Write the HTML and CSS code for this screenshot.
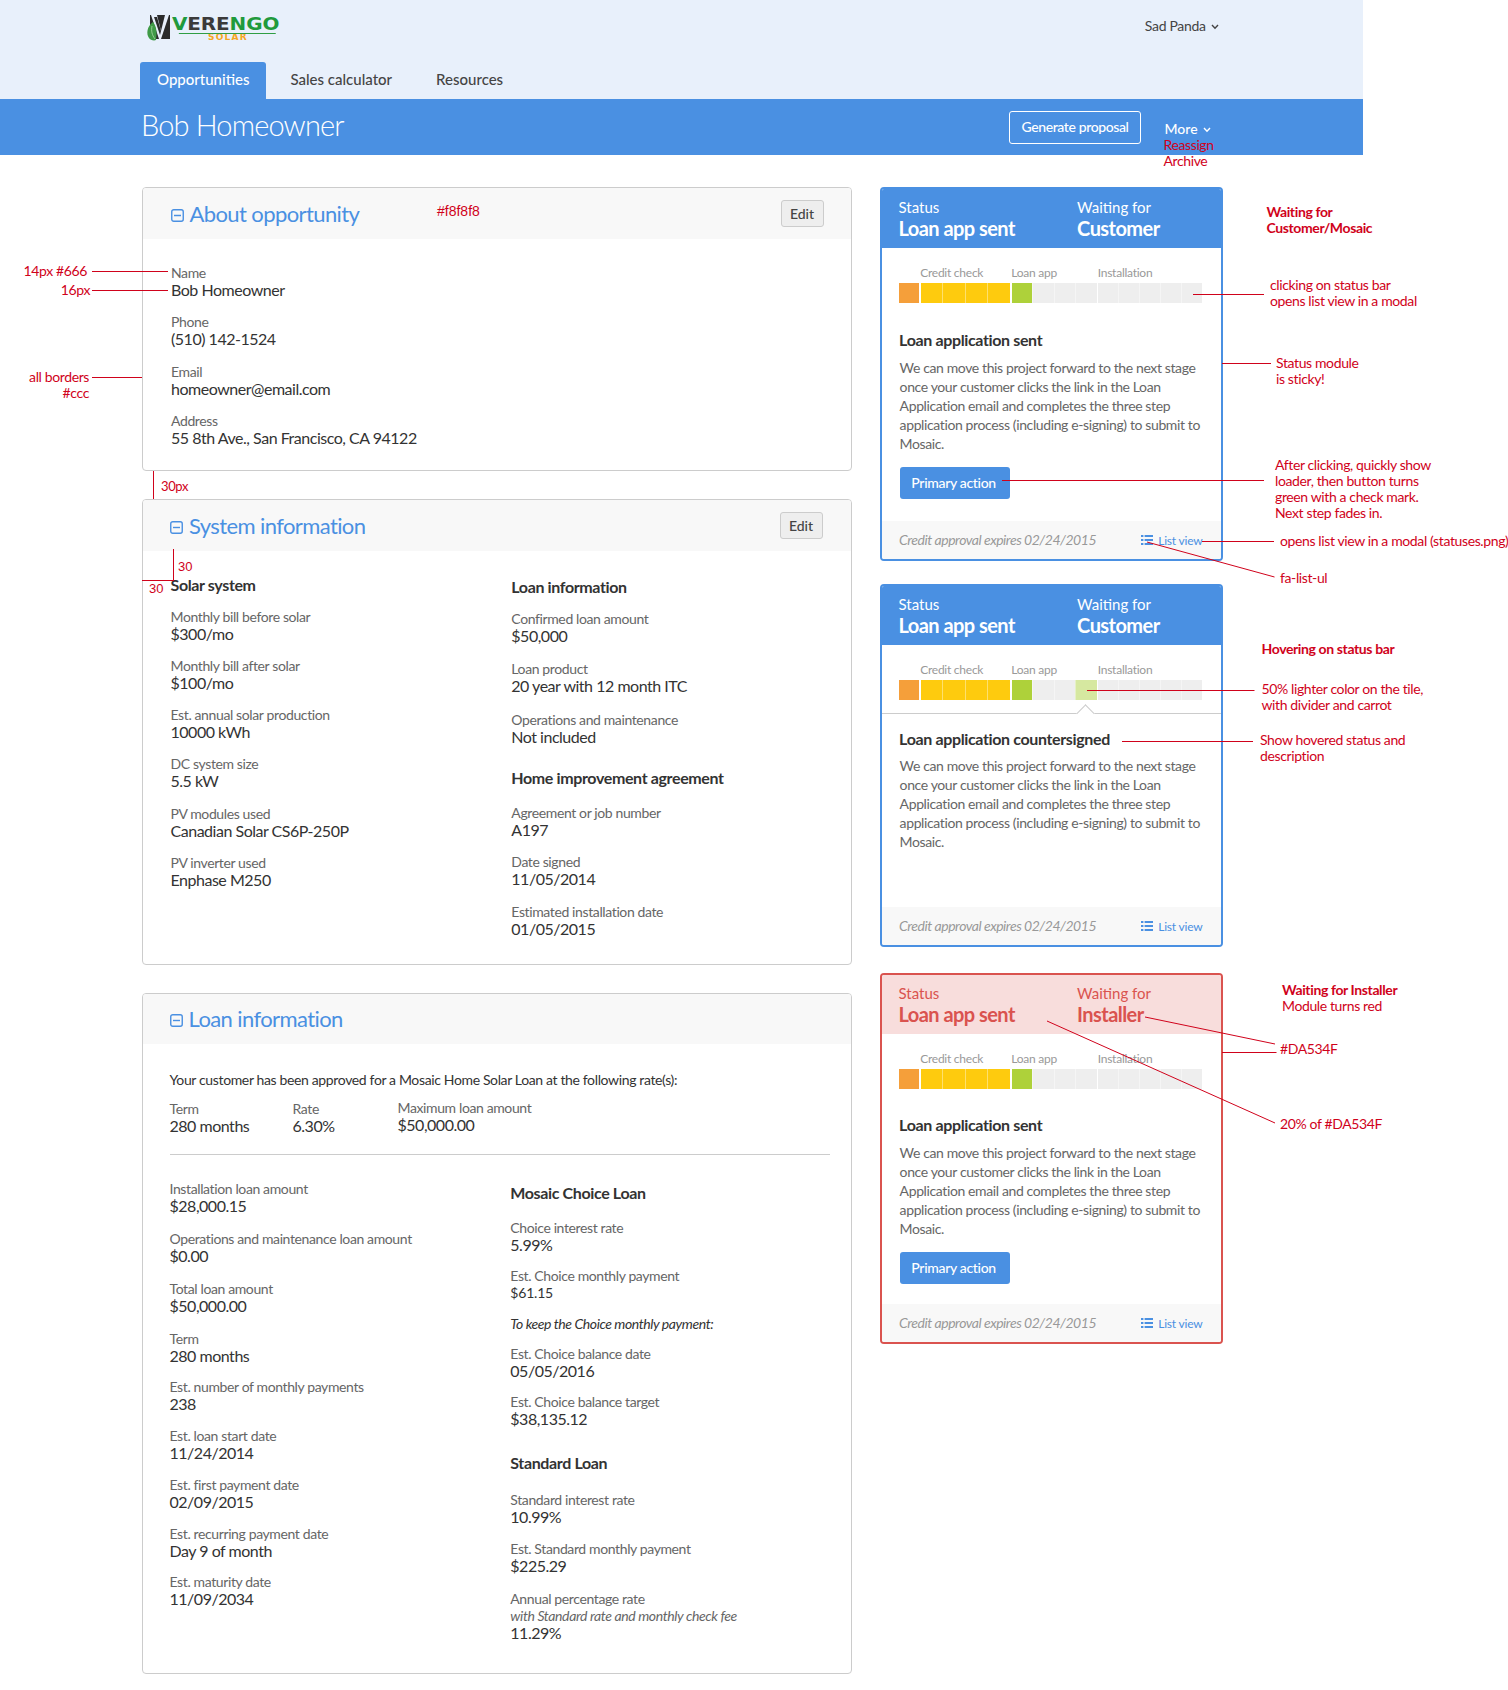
FILE: index.html
```html
<!DOCTYPE html>
<html lang="en">
<head>
<meta charset="utf-8">
<title>Bob Homeowner</title>
<link rel="stylesheet" href="styles.css">
</head>
<body>
<div class="page">
  <header class="top">
    <div class="top-row">
      <a class="logo">
        <svg class="logo-mark" width="24" height="27" viewBox="0 0 24 27">
          <rect x="4" y="1" width="20" height="24" fill="#2b2b2b"/>
          <polygon points="5,1 11,1 15,17 19,1 23,1 15,25 13,25" fill="#e8f0fb"/>
          <polygon points="8,3 11,3 15,17 14,21" fill="#2b2b2b"/>
          <path d="M7 8 C1 12 0 20 3 24 C4 26 8 27 10 26 C11 19 11 13 7 8 Z" fill="#3f9a46"/>
          <path d="M6 12 C5 17 6 21 9 25" stroke="#a9d8a5" stroke-width="0.8" fill="none"/>
        </svg>
        <span class="logo-text">
          <span class="logo-name"><span class="logo-g">V</span><span class="logo-d">ERE</span><span class="logo-g">NGO</span></span>
          <span class="logo-sub">SOLAR</span>
        </span>
      </a>
      <div class="user">Sad Panda <svg class="chev" width="8" height="6" viewBox="0 0 8 6"><polyline points="1,1 4,4.2 7,1" fill="none" stroke="#444" stroke-width="1.4"/></svg></div>
    </div>
    <nav class="tabs">
      <a class="tab active">Opportunities</a>
      <a class="tab">Sales calculator</a>
      <a class="tab">Resources</a>
    </nav>
  </header>
  <div class="bar">
    <h1 class="bar-title">Bob Homeowner</h1>
    <div class="bar-actions">
      <a class="btn-outline">Generate proposal</a>
      <a class="more">More <svg class="chev" width="8" height="6" viewBox="0 0 8 6"><polyline points="1,1 4,4.2 7,1" fill="none" stroke="#fff" stroke-width="1.4"/></svg></a>
    </div>
  </div>

  <main class="main">
    <div class="left">
      <section class="panel panel-about">
        <div class="panel-head">
          <h2 class="panel-title"><svg class="minus" width="13" height="13" viewBox="0 0 13 13"><rect x="0.75" y="0.75" width="11.5" height="11.5" rx="2" fill="none" stroke="#4a90e2" stroke-width="1.4"/><line x1="3" y1="6.5" x2="10" y2="6.5" stroke="#4a90e2" stroke-width="1.4"/></svg>About opportunity</h2>
          <a class="edit">Edit</a>
        </div>
        <div class="panel-body about-body">
          <div class="field"><div class="label">Name</div><div class="value">Bob Homeowner</div></div>
          <div class="field"><div class="label">Phone</div><div class="value">(510) 142-1524</div></div>
          <div class="field"><div class="label">Email</div><div class="value">homeowner@email.com</div></div>
          <div class="field"><div class="label">Address</div><div class="value">55 8th Ave., San Francisco, CA 94122</div></div>
        </div>
      </section>

      <section class="panel panel-system">
        <div class="panel-head">
          <h2 class="panel-title"><svg class="minus" width="13" height="13" viewBox="0 0 13 13"><rect x="0.75" y="0.75" width="11.5" height="11.5" rx="2" fill="none" stroke="#4a90e2" stroke-width="1.4"/><line x1="3" y1="6.5" x2="10" y2="6.5" stroke="#4a90e2" stroke-width="1.4"/></svg>System information</h2>
          <a class="edit">Edit</a>
        </div>
        <div class="panel-body system-body cols">
          <div class="col">
            <h3 class="sub sub-first">Solar system</h3>
            <div class="field"><div class="label">Monthly bill before solar</div><div class="value">$300/mo</div></div>
            <div class="field"><div class="label">Monthly bill after solar</div><div class="value">$100/mo</div></div>
            <div class="field"><div class="label">Est. annual solar production</div><div class="value">10000 kWh</div></div>
            <div class="field"><div class="label">DC system size</div><div class="value">5.5 kW</div></div>
            <div class="field"><div class="label">PV modules used</div><div class="value">Canadian Solar CS6P-250P</div></div>
            <div class="field"><div class="label">PV inverter used</div><div class="value">Enphase M250</div></div>
          </div>
          <div class="col col-right">
            <h3 class="sub sub-loan">Loan information</h3>
            <div class="field"><div class="label">Confirmed loan amount</div><div class="value">$50,000</div></div>
            <div class="field"><div class="label">Loan product</div><div class="value">20 year with 12 month ITC</div></div>
            <div class="field"><div class="label">Operations and maintenance</div><div class="value">Not included</div></div>
            <h3 class="sub sub-home">Home improvement agreement</h3>
            <div class="field"><div class="label">Agreement or job number</div><div class="value">A197</div></div>
            <div class="field"><div class="label">Date signed</div><div class="value">11/05/2014</div></div>
            <div class="field"><div class="label">Estimated installation date</div><div class="value">01/05/2015</div></div>
          </div>
        </div>
      </section>

      <section class="panel panel-loan">
        <div class="panel-head">
          <h2 class="panel-title"><svg class="minus" width="13" height="13" viewBox="0 0 13 13"><rect x="0.75" y="0.75" width="11.5" height="11.5" rx="2" fill="none" stroke="#4a90e2" stroke-width="1.4"/><line x1="3" y1="6.5" x2="10" y2="6.5" stroke="#4a90e2" stroke-width="1.4"/></svg>Loan information</h2>
        </div>
        <div class="panel-body loan-body">
          <p class="intro">Your customer has been approved for a Mosaic Home Solar Loan at the following rate(s):</p>
          <div class="rates">
            <div class="field rate-term"><div class="label">Term</div><div class="value">280 months</div></div>
            <div class="field rate-rate"><div class="label">Rate</div><div class="value">6.30%</div></div>
            <div class="field rate-max"><div class="label">Maximum loan amount</div><div class="value">$50,000.00</div></div>
          </div>
          <hr class="rule">
          <div class="cols">
            <div class="col col-tight">
              <div class="field"><div class="label">Installation loan amount</div><div class="value">$28,000.15</div></div>
              <div class="field"><div class="label">Operations and maintenance loan amount</div><div class="value">$0.00</div></div>
              <div class="field"><div class="label">Total loan amount</div><div class="value">$50,000.00</div></div>
              <div class="field"><div class="label">Term</div><div class="value">280 months</div></div>
              <div class="field"><div class="label">Est. number of monthly payments</div><div class="value">238</div></div>
              <div class="field"><div class="label">Est. loan start date</div><div class="value">11/24/2014</div></div>
              <div class="field"><div class="label">Est. first payment date</div><div class="value">02/09/2015</div></div>
              <div class="field"><div class="label">Est. recurring payment date</div><div class="value">Day 9 of month</div></div>
              <div class="field"><div class="label">Est. maturity date</div><div class="value">11/09/2034</div></div>
            </div>
            <div class="col col-rates">
              <h3 class="sub sub-mosaic">Mosaic Choice Loan</h3>
              <div class="field"><div class="label">Choice interest rate</div><div class="value">5.99%</div></div>
              <div class="field"><div class="label">Est. Choice monthly payment</div><div class="value value-sm">$61.15</div></div>
              <p class="note-it">To keep the Choice monthly payment:</p>
              <div class="field"><div class="label">Est. Choice balance date</div><div class="value">05/05/2016</div></div>
              <div class="field"><div class="label">Est. Choice balance target</div><div class="value">$38,135.12</div></div>
              <h3 class="sub sub-standard">Standard Loan</h3>
              <div class="field"><div class="label">Standard interest rate</div><div class="value">10.99%</div></div>
              <div class="field"><div class="label">Est. Standard monthly payment</div><div class="value">$225.29</div></div>
              <div class="field"><div class="label">Annual percentage rate</div><div class="label label-it">with Standard rate and monthly check fee</div><div class="value">11.29%</div></div>
            </div>
          </div>
        </div>
      </section>
    </div>

    <aside class="right">
      <section class="card card-one">
        <div class="card-head">
          <div><div class="ch-label">Status</div><div class="ch-value">Loan app sent</div></div>
          <div><div class="ch-label">Waiting for</div><div class="ch-value">Customer</div></div>
        </div>
        <div class="card-body">
          <div class="stages">
            <div class="stage s-a"><div class="stage-label">&nbsp;</div><div class="tiles"><i class="tile orange"></i></div></div>
            <div class="stage s-b"><div class="stage-label">Credit check</div><div class="tiles"><i class="tile yellow"></i><i class="tile yellow"></i><i class="tile yellow"></i><i class="tile yellow"></i></div></div>
            <div class="stage s-c"><div class="stage-label">Loan app</div><div class="tiles"><i class="tile green"></i><i class="tile grey"></i><i class="tile grey"></i><i class="tile grey"></i></div></div>
            <div class="stage s-d"><div class="stage-label">Installation</div><div class="tiles"><i class="tile grey"></i><i class="tile grey"></i><i class="tile grey"></i><i class="tile grey"></i><i class="tile grey"></i></div></div>
          </div>
          <h3 class="card-title">Loan application sent</h3>
          <p class="card-text">We can move this project forward to the next stage once your customer clicks the link in the Loan Application email and completes the three step application process (including e-signing) to submit to Mosaic.</p>
          <a class="btn-primary">Primary action</a>
        </div>
        <div class="card-foot">
          <em class="expires">Credit approval expires 02/24/2015</em>
          <a class="listview"><svg width="12" height="10" viewBox="0 0 12 10"><rect y="0" width="2.4" height="2" fill="#4a90e2"/><rect y="4" width="2.4" height="2" fill="#4a90e2"/><rect y="8" width="2.4" height="2" fill="#4a90e2"/><rect x="3.6" y="0" width="8.4" height="2" fill="#4a90e2"/><rect x="3.6" y="4" width="8.4" height="2" fill="#4a90e2"/><rect x="3.6" y="8" width="8.4" height="2" fill="#4a90e2"/></svg>List view</a>
        </div>
      </section>

      <section class="card card-two">
        <div class="card-head">
          <div><div class="ch-label">Status</div><div class="ch-value">Loan app sent</div></div>
          <div><div class="ch-label">Waiting for</div><div class="ch-value">Customer</div></div>
        </div>
        <div class="card-body">
          <div class="stages">
            <div class="stage s-a"><div class="stage-label">&nbsp;</div><div class="tiles"><i class="tile orange"></i></div></div>
            <div class="stage s-b"><div class="stage-label">Credit check</div><div class="tiles"><i class="tile yellow"></i><i class="tile yellow"></i><i class="tile yellow"></i><i class="tile yellow"></i></div></div>
            <div class="stage s-c"><div class="stage-label">Loan app</div><div class="tiles"><i class="tile green"></i><i class="tile grey"></i><i class="tile grey"></i><i class="tile lime"></i></div></div>
            <div class="stage s-d"><div class="stage-label">Installation</div><div class="tiles"><i class="tile grey"></i><i class="tile grey"></i><i class="tile grey"></i><i class="tile grey"></i><i class="tile grey"></i></div></div>
          </div>
          <div class="hover-rule"><span class="caret"></span></div>
          <h3 class="card-title">Loan application countersigned</h3>
          <p class="card-text">We can move this project forward to the next stage once your customer clicks the link in the Loan Application email and completes the three step application process (including e-signing) to submit to Mosaic.</p>
        </div>
        <div class="card-foot">
          <em class="expires">Credit approval expires 02/24/2015</em>
          <a class="listview"><svg width="12" height="10" viewBox="0 0 12 10"><rect y="0" width="2.4" height="2" fill="#4a90e2"/><rect y="4" width="2.4" height="2" fill="#4a90e2"/><rect y="8" width="2.4" height="2" fill="#4a90e2"/><rect x="3.6" y="0" width="8.4" height="2" fill="#4a90e2"/><rect x="3.6" y="4" width="8.4" height="2" fill="#4a90e2"/><rect x="3.6" y="8" width="8.4" height="2" fill="#4a90e2"/></svg>List view</a>
        </div>
      </section>

      <section class="card card-three">
        <div class="card-head">
          <div><div class="ch-label">Status</div><div class="ch-value">Loan app sent</div></div>
          <div><div class="ch-label">Waiting for</div><div class="ch-value">Installer</div></div>
        </div>
        <div class="card-body">
          <div class="stages">
            <div class="stage s-a"><div class="stage-label">&nbsp;</div><div class="tiles"><i class="tile orange"></i></div></div>
            <div class="stage s-b"><div class="stage-label">Credit check</div><div class="tiles"><i class="tile yellow"></i><i class="tile yellow"></i><i class="tile yellow"></i><i class="tile yellow"></i></div></div>
            <div class="stage s-c"><div class="stage-label">Loan app</div><div class="tiles"><i class="tile green"></i><i class="tile grey"></i><i class="tile grey"></i><i class="tile grey"></i></div></div>
            <div class="stage s-d"><div class="stage-label">Installation</div><div class="tiles"><i class="tile grey"></i><i class="tile grey"></i><i class="tile grey"></i><i class="tile grey"></i><i class="tile grey"></i></div></div>
          </div>
          <h3 class="card-title">Loan application sent</h3>
          <p class="card-text">We can move this project forward to the next stage once your customer clicks the link in the Loan Application email and completes the three step application process (including e-signing) to submit to Mosaic.</p>
          <a class="btn-primary">Primary action</a>
        </div>
        <div class="card-foot">
          <em class="expires">Credit approval expires 02/24/2015</em>
          <a class="listview"><svg width="12" height="10" viewBox="0 0 12 10"><rect y="0" width="2.4" height="2" fill="#4a90e2"/><rect y="4" width="2.4" height="2" fill="#4a90e2"/><rect y="8" width="2.4" height="2" fill="#4a90e2"/><rect x="3.6" y="0" width="8.4" height="2" fill="#4a90e2"/><rect x="3.6" y="4" width="8.4" height="2" fill="#4a90e2"/><rect x="3.6" y="8" width="8.4" height="2" fill="#4a90e2"/></svg>List view</a>
        </div>
      </section>
    </aside>
  </main>

  <svg class="lines" width="1508" height="1690" viewBox="0 0 1508 1690">
    <g stroke="#d0021b" stroke-width="1">
      <line x1="92" y1="271.5" x2="168" y2="271.5"/>
      <line x1="92" y1="290.5" x2="168" y2="290.5"/>
      <line x1="92" y1="377.5" x2="142" y2="377.5"/>
      <line x1="153.5" y1="471" x2="153.5" y2="499"/>
      <line x1="173.5" y1="549" x2="173.5" y2="581"/>
      <line x1="142" y1="580.5" x2="173" y2="580.5"/>
      <line x1="1193" y1="294.5" x2="1264" y2="294.5"/>
      <line x1="1222" y1="363.5" x2="1271" y2="363.5"/>
      <line x1="1002" y1="480.5" x2="1264" y2="480.5"/>
      <line x1="1202" y1="541.5" x2="1274" y2="541.5"/>
      <line x1="1147" y1="542" x2="1274.5" y2="577"/>
      <line x1="1087" y1="690.5" x2="1254.5" y2="690.5"/>
      <line x1="1122" y1="741.5" x2="1253" y2="741.5"/>
      <line x1="1222" y1="1052.5" x2="1276.5" y2="1052.5"/>
      <line x1="1145" y1="1017" x2="1275" y2="1044"/>
      <line x1="1047" y1="1021" x2="1275" y2="1123"/>
    </g>
  </svg>

  <div class="n n-14">14px #666</div>
  <div class="n n-16">16px</div>
  <div class="n n-borders">all borders<br>#ccc</div>
  <div class="n n-f8">#f8f8f8</div>
  <div class="n n-30px">30px</div>
  <div class="n n-30a">30</div>
  <div class="n n-30b">30</div>
  <div class="n n-more">Reassign<br>Archive</div>
  <div class="n n-wait"><b>Waiting for<br>Customer/Mosaic</b></div>
  <div class="n n-click">clicking on status bar<br>opens list view in a modal</div>
  <div class="n n-sticky">Status module<br>is sticky!</div>
  <div class="n n-after">After clicking, quickly show<br>loader, then button turns<br>green with a check mark.<br>Next step fades in.</div>
  <div class="n n-opens">opens list view in a modal (statuses.png)</div>
  <div class="n n-fa">fa-list-ul</div>
  <div class="n n-hover"><b>Hovering on status bar</b></div>
  <div class="n n-lighter">50% lighter color on the tile,<br>with divider and carrot</div>
  <div class="n n-show">Show hovered status and<br>description</div>
  <div class="n n-installer"><b>Waiting for Installer</b><br>Module turns red</div>
  <div class="n n-hex">#DA534F</div>
  <div class="n n-20">20% of #DA534F</div>
</div>
</body>
</html>
```
FILE: styles.css
```css
* { box-sizing: border-box; }
html, body { margin: 0; padding: 0; background: #fff; }
body { font-family: Lato, "Open Sans", sans-serif; color: #333; font-size: 14px; }
.page { position: relative; width: 1508px; height: 1690px; overflow: hidden; }
h1, h2, h3, p { margin: 0; font-weight: normal; }
a { color: inherit; text-decoration: none; }

/* top */
.top { width: 1363px; height: 99px; background: #e8f0fb; padding-left: 140px; }
.top-row { display: flex; justify-content: space-between; height: 62px; padding-right: 144px; }
.logo { display: flex; margin-top: 14px; margin-left: 6px; height: 30px; }
.logo-mark { display: block; }
.logo-text { position: relative; display: block; margin-left: 2px; width: 110px; }
.logo-name { display: block; font: bold 17.5px/18px "DejaVu Sans", sans-serif; letter-spacing: -0.1px; margin-top: 1px; white-space: nowrap; transform: scaleX(1.14); transform-origin: left center; }
.logo-name::after { content: ""; position: absolute; left: 6px; top: 18px; width: 85px; height: 1px; background: #2f9e44; }
.logo-g { color: #1f9a3c; }
.logo-d { color: #3a3a3a; }
.logo-sub { display: block; font: bold 9px/9px "DejaVu Sans", sans-serif; letter-spacing: 1.2px; color: #f5a623; margin-left: 36px; margin-top: 0; }
.user { margin-top: 17px; height: 18px; line-height: 18px; font-size: 14px; color: #444; letter-spacing: -0.3px; }
.chev { margin-left: 2px; vertical-align: 1px; }

.tabs { display: flex; height: 37px; }
.tab { padding: 0 17px; line-height: 35px; font-size: 15px; font-weight: 500; color: #444; }
.tab.active { background: #4a90e2; color: #fff; border-radius: 3px 3px 0 0; margin-right: 7px; }
.tab + .tab + .tab { margin-left: 10px; }

.bar { width: 1363px; height: 56px; background: #4a90e2; display: flex; justify-content: space-between; padding: 0 148.5px 0 141px; }
.bar-title { font-size: 29px; font-weight: 300; line-height: 52px; color: #fff; letter-spacing: -0.85px; }
.bar-actions { display: flex; align-items: flex-start; padding-top: 12px; }
.btn-outline { display: block; width: 132px; height: 33px; border: 1px solid #fff; border-radius: 3px; text-align: center; line-height: 30px; color: #fff; font-size: 14px; font-weight: 500; letter-spacing: -0.38px; }
.more { display: block; margin-left: 23.5px; margin-top: 9px; width: 50px; line-height: 18px; font-size: 14px; font-weight: 500; color: #fff; }

/* main */
.main { display: flex; gap: 28px; padding: 32px 0 0 141.5px; align-items: flex-start; }
.left { width: 710px; display: flex; flex-direction: column; gap: 28px; }
.right { width: 343px; }

.panel { border: 1px solid #ccc; border-radius: 4px; overflow: hidden; }
.panel-head { display: flex; justify-content: space-between; align-items: center; height: 51px; background: #f8f8f8; padding: 0 27px 0 28px; }
.panel-title { display: flex; align-items: center; font-size: 22px; line-height: 28px; color: #4a90e2; letter-spacing: -0.6px; }
.minus { margin-right: 6px; margin-top: 3px; flex: none; }
.edit { display: block; width: 43px; height: 27px; border: 1px solid #ccc; border-radius: 3px; background: #eee; text-align: center; line-height: 25px; font-size: 14px; font-weight: 500; color: #444; }
.panel-body { padding: 25px 0 0 28.5px; }

.field { margin-bottom: 14.3px; }
.label { font-size: 14px; line-height: 17px; color: #666; letter-spacing: -0.38px; white-space: nowrap; }
.label-it { font-style: italic; }
.value { font-size: 16px; line-height: 18px; color: #333; letter-spacing: -0.48px; }
.value-sm { font-size: 14px; letter-spacing: -0.2px; }

.about-body { padding-top: 24.5px; height: 231px; }
.about-body .field { margin-bottom: 14.5px; }

.cols { display: grid; grid-template-columns: 340.8px 1fr; }
.sub { font-size: 16px; font-weight: bold; line-height: 20px; color: #333; letter-spacing: -0.37px; }
.sub-first { margin-top: -1px; margin-bottom: 12.5px; }
.panel-system .panel-head { padding: 0 28px 0 27.5px; }
.system-body { height: 413px; padding-left: 28px; }
.col-right { padding-top: 1px; }
.col-right .field { margin-bottom: 15.7px; }
.sub-loan { margin-bottom: 12.5px; }
.sub-home { margin-top: 22.5px; margin-bottom: 15.5px; }
.col-right .sub-home ~ .field { margin-bottom: 14.5px; }

.panel-loan .panel-head { padding-left: 27px; height: 50px; }
.loan-body { height: 629px; padding: 26px 21px 0 27px; }
.intro { font-size: 14px; line-height: 20px; color: #333; margin-bottom: 9.5px; letter-spacing: -0.36px; }
.rates { display: flex; }
.rates .field { margin-bottom: 0; }
.rate-term { width: 123px; }
.rate-rate { width: 105px; }
.rate-max { margin-top: -1px; }
.rule { border: 0; border-top: 1px solid #ccc; margin: 19.3px 0 25px; }
.col-tight .field { margin-bottom: 13.7px; }
.col-tight .field:nth-child(-n+3) { margin-bottom: 15px; }
.col-rates { padding-top: 3.5px; }
.col-rates .field { margin-bottom: 13px; }
.sub-mosaic { margin-bottom: 15.5px; }
.note-it { font-size: 14px; font-style: italic; line-height: 17px; color: #333; margin-bottom: 13px; letter-spacing: -0.42px; white-space: nowrap; }
.sub-standard { margin-top: 25.5px; margin-bottom: 17.5px; }
.col-rates .sub-standard ~ .field { margin-bottom: 14.5px; }

/* status cards */
.card { border: 2px solid #4a90e2; border-radius: 4px; overflow: hidden; margin-bottom: 23px; background: #fff; }
.card-head { display: grid; grid-template-columns: 178.6px 1fr; margin: -2px -2px 0; height: 61px; padding: 11px 0 0 19px; background: #4a90e2; color: #fff; }
.ch-label { font-size: 15px; line-height: 18px; }
.ch-value { font-size: 20px; font-weight: bold; line-height: 22px; letter-spacing: -0.55px; margin-top: 1px; }
.card-body { padding: 17px 18px 0 17.6px; }
.stages { display: flex; gap: 1.5px; }
.stage-label { font-size: 12px; line-height: 16px; color: #999; margin: 0 0 2px -0.4px; white-space: nowrap; letter-spacing: -0.25px; }
.s-a { width: 20px; }
.s-b { width: 89.5px; }
.s-c { width: 85px; }
.s-d { width: 104px; }
.tiles { display: flex; height: 20px; }
.tile { flex: 1; display: block; }
.tile + .tile { border-left: 1px solid rgba(255, 255, 255, 0.4); }
.orange { background: #f59f3a; }
.yellow { background: #fecb0e; }
.green { background: #aed13a; }
.grey { background: #eee; }
.lime { background: #d6e8a0; }

.card-title { font-size: 16px; font-weight: bold; line-height: 22px; color: #333; margin-top: 26px; letter-spacing: -0.36px; }
.card-text { font-size: 14px; line-height: 19px; color: #666; margin: 6.5px 0 0 0.5px; width: 304px; letter-spacing: -0.38px; }
.btn-primary { display: block; width: 110px; height: 32px; margin: 14.5px 0 22px 0.5px; padding-right: 2px; background: #4a90e2; border-radius: 3px; text-align: center; line-height: 32px; font-size: 14px; font-weight: 500; color: #fff; letter-spacing: -0.32px; }
.card-foot { display: flex; justify-content: space-between; align-items: center; height: 38px; padding: 0 18px 2px 17.6px; background: #f8f8f8; }
.expires { font-size: 14px; color: #999; letter-spacing: -0.47px; }
.listview { display: flex; align-items: center; gap: 5px; font-size: 12px; color: #4a90e2; padding-top: 2px; letter-spacing: -0.2px; }

.card-two { margin-bottom: 26px; }
.card-two .card-body { padding-bottom: 56.5px; }
.card-two .card-title { margin-top: 14px; }
.card-two .card-text { margin-top: 5.5px; }
.hover-rule { position: relative; height: 1px; background: #ccc; margin: 13px -18px 0 -17.6px; }
.caret { position: absolute; left: 197px; top: -6px; width: 13px; height: 13px; background: #fff; border-top: 1px solid #ccc; border-left: 1px solid #ccc; transform: rotate(45deg); }
.card-three { border-color: #da534f; margin-bottom: 0; }
.card-three .card-head { background: #f8dddc; color: #da534f; }
.card-three .card-title { margin-top: 25px; }
.card-three .btn-primary { margin-bottom: 20px; }

/* annotations */
.lines { position: absolute; left: 0; top: 0; pointer-events: none; }
.n { position: absolute; font-size: 14px; line-height: 16px; color: #d0021b; white-space: nowrap; letter-spacing: -0.38px; }
.n b { font-weight: bold; }
.n-14 { right: 1421px; top: 263px; }
.n-16 { right: 1418px; top: 282px; }
.n-borders { right: 1419px; top: 369px; text-align: right; }
.n-f8 { left: 437px; top: 203px; font-family: "Liberation Sans", sans-serif; font-size: 14px; letter-spacing: 0; }
.n-30px { left: 161px; top: 478px; font-size: 13px; }
.n-30a { left: 178px; top: 559px; font-family: "Liberation Sans", sans-serif; font-size: 13px; letter-spacing: 0; }
.n-30b { left: 149px; top: 581px; font-family: "Liberation Sans", sans-serif; font-size: 13px; letter-spacing: 0; }
.n-more { left: 1163.5px; top: 137px; font-size: 14px; }
.n-wait { left: 1266.5px; top: 204px; }
.n-click { left: 1270px; top: 277px; }
.n-sticky { left: 1276px; top: 355px; }
.n-after { left: 1275px; top: 457px; }
.n-opens { left: 1280px; top: 533px; }
.n-fa { left: 1280px; top: 570px; }
.n-hover { left: 1261.5px; top: 641px; }
.n-lighter { left: 1261.5px; top: 681px; }
.n-show { left: 1260px; top: 732px; }
.n-installer { left: 1282px; top: 982px; }
.n-hex { left: 1280px; top: 1041px; }
.n-20 { left: 1280px; top: 1116px; }
```
